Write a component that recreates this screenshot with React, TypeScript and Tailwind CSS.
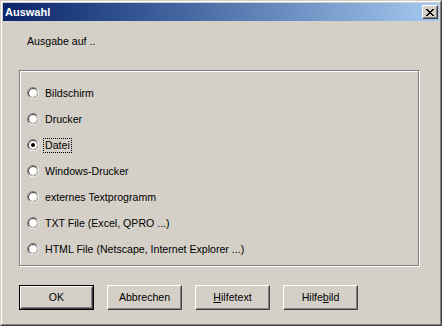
import React from "react";

const options = [
  "Bildschirm",
  "Drucker",
  "Datei",
  "Windows-Drucker",
  "externes Textprogramm",
  "TXT File (Excel, QPRO ...)",
  "HTML File (Netscape, Internet Explorer ...)",
];

function Radio({ checked }: { checked: boolean }) {
  return (
    <svg width="12" height="12" viewBox="0 0 12 12" className="shrink-0">
      <circle cx="6" cy="6" r="5.5" fill="none" stroke="#808080" />
      <path d="M10.2 2.2 A5.5 5.5 0 0 1 2.2 10.2" fill="none" stroke="#ffffff" />
      <circle cx="6" cy="6" r="4.5" fill="#ffffff" stroke="#404040" />
      <path d="M9.2 2.8 A4.5 4.5 0 0 1 2.8 9.2" fill="none" stroke="#d4d0c8" />
      {checked && <circle cx="6" cy="6" r="2" fill="#000000" />}
    </svg>
  );
}

function Btn({
  children,
  isDefault,
}: {
  children: React.ReactNode;
  isDefault?: boolean;
}) {
  return (
    <div
      className={`w-[75px] h-[25px] ${
        isDefault ? "border border-black" : ""
      }`}
    >
      <div className="w-full h-full border border-t-white border-l-white border-b-[#404040] border-r-[#404040]">
        <div className="w-full h-full border border-t-[#d4d0c8] border-l-[#d4d0c8] border-b-[#808080] border-r-[#808080] flex items-center justify-center text-[10.6px] text-black">
          {children}
        </div>
      </div>
    </div>
  );
}

export default function App() {
  return (
    <div
      className="w-[442px] h-[326px] bg-[#d4d0c8] border border-t-[#d4d0c8] border-l-[#d4d0c8] border-b-[#404040] border-r-[#404040]"
      style={{ fontFamily: '"Liberation Sans", Arial, sans-serif' }}
    >
      <div className="w-full h-full border border-t-white border-l-white border-b-[#808080] border-r-[#808080] p-px flex flex-col">
        {/* title bar */}
        <div className="h-[18px] flex items-center justify-between bg-gradient-to-r from-[#0a246a] to-[#a6caf0]">
          <span className="pl-[2px] text-white font-bold text-[11px]">Auswahl</span>
          <div className="mr-[1px] w-[16px] h-[14px] bg-[#d4d0c8] border border-t-white border-l-white border-b-[#404040] border-r-[#404040]">
            <div className="w-full h-full border border-b-[#808080] border-r-[#808080] border-t-transparent border-l-transparent flex items-center justify-center">
              <svg width="8" height="7" viewBox="0 0 8 7" shapeRendering="crispEdges">
                <path
                  d="M0 0h2v1H0zM6 0h2v1H6zM1 1h2v1H1zM5 1h2v1H5zM2 2h4v1H2zM3 3h2v1H3zM2 4h4v1H2zM1 5h2v1H1zM5 5h2v1H5zM0 6h2v1H0zM6 6h2v1H6z"
                  fill="#000"
                />
              </svg>
            </div>
          </div>
        </div>

        {/* body */}
        <div className="px-[16px] pt-[14px] flex flex-col">
          <p className="ml-[8px] text-[10.6px] leading-[13px] text-black">Ausgabe auf ..</p>

          <div className="mt-[22px] w-[400px] h-[196px] border border-[#808080] shadow-[inset_1px_1px_0_white,1px_1px_0_white] pt-[9px] pl-[7px]">
            {options.map((opt) => (
              <div key={opt} className="h-[26px] flex items-center gap-[5px]">
                <Radio checked={opt === "Datei"} />
                <span
                  className={`text-[10.6px] leading-[13px] text-black px-[1px] ${
                    opt === "Datei" ? "outline outline-1 outline-dotted outline-black" : ""
                  }`}
                >
                  {opt}
                </span>
              </div>
            ))}
          </div>

          <div className="mt-[19px] flex gap-[13px]">
            <Btn isDefault>OK</Btn>
            <Btn>Abbrechen</Btn>
            <Btn>
              <span>
                <u>H</u>ilfetext
              </span>
            </Btn>
            <Btn>
              <span>
                Hilfe<u>b</u>ild
              </span>
            </Btn>
          </div>
        </div>
      </div>
    </div>
  );
}
